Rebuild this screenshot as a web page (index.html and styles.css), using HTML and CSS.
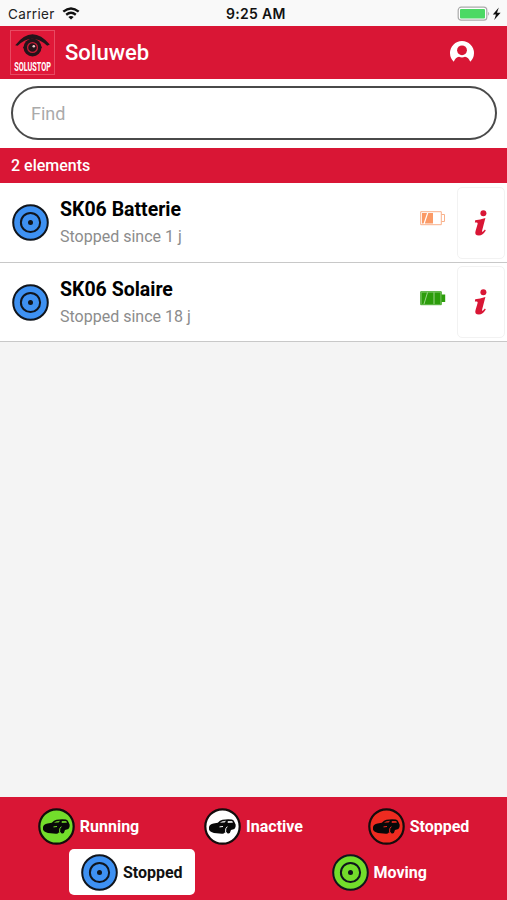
FILE: index.html
```
<!DOCTYPE html>
<html lang="en">
<head>
	<meta charset="utf-8">
	<meta name="viewport" content="width=device-width, initial-scale=1.0">
	<title>Soluweb</title>
	<link rel="stylesheet" href="styles.css">
</head>

<body>
	<!-- SHARED ICONS -->
	<svg class="defs" width="0" height="0">
		<symbol id="target" viewBox="0 0 37 37">
			<g fill="none" stroke="#10151c" stroke-width="2">
				<circle cx="18.5" cy="18.5" r="17.3" fill="currentColor"/>
				<circle cx="18.5" cy="18.5" r="9.6"/>
			</g>
			<circle cx="18.5" cy="18.5" r="2.5" fill="#10151c"/>
		</symbol>
		<symbol id="car" viewBox="0 0 37 37">
			<circle cx="18.5" cy="18.5" r="17.2" fill="currentColor" stroke="#140c0c" stroke-width="2.2"/>
			<path d="M5 19q.6-2.4 4.500-3.400l4.300-.8q2-2.500 4.700-3.100 5.500-1 9.500-.2 2 .5 2.700 3l1 2.200q.3 3.200-1.300 4.300l-3.400 1q-.7 3.300-2.500 3.600-1.500.1-2-1.500l-1.700.3q-1 1.600-2.800 1.400l-8-.8q-4.500-1.200-5-3.500z" fill="#080808"/>
			<path d="M15.800 14.700q2.200-1.900 6.200-1.900l-1.300 1.800zM23.800 12.900l4.400.2.800 1.700-5.300.1z" fill="currentColor" opacity=".85"/>
			<path d="M21.600 24.200q-.5-4.200 1.700-5.600M15.500 18.900l3.500-.4" fill="none" stroke="currentColor" stroke-width="1"/>
		</symbol>
		<symbol id="info" viewBox="0 0 14 26">
			<circle cx="9.4" cy="3.2" r="3"/>
			<path d="M1.200 10.300q4.800-.4 10.200-2.300L8.200 20.300q-.5 2 .5 1.400 1-.6 2.200-2.100l.9.800q-3 4.900-6.900 5-4.600 0-3.400-4.200l2.100-7.200q.4-1.500-.8-1.500H.9z"/>
		</symbol>
	</svg>

	<div class="status">
		<span class="carrier">Carrier</span>
		<svg class="wifi" width="18" height="13" viewBox="0 0 18 13">
			<path d="M1.3 4.7q7.7-6.4 15.4 0M4.2 7.7q4.800-3.700 9.600 0" fill="none" stroke="#111" stroke-width="2.4"/>
			<path d="M6.3 9.9q2.700-2 5.400 0L9 12.600z" fill="#111"/>
		</svg>
		<span class="time">9:25 AM</span>
		<svg class="power" width="46" height="16" viewBox="0 0 46 16">
			<rect x="1.2" y="1.2" width="28.6" height="13" rx="3" fill="#fff" stroke="#aaa" stroke-width="1.2"/>
			<rect x="3" y="3" width="25" height="9.4" rx="1" fill="#4cd964"/>
			<path d="M31.2 5.7q2 2 0 4z" fill="#aaa"/>
			<path d="M41.8 1.5L35.800 8.500h3.200L37.200 14 43.600 6.700H40z" fill="#111"/>
		</svg>
	</div>

	<header class="header">
		<svg class="logo" width="45" height="45" viewBox="0 0 45 45">
			<rect x=".5" y=".5" width="44" height="44" fill="#e01838" stroke="#e84a62"/>
			<path d="M5.2 15.2Q22-6.500 39.800 14.500l-2.600 1.300Q22 1.800 7.700 15.800z" fill="#23141a"/>
			<path d="M13 17.5Q22 5.500 32 17.300 22.500 31 13 17.500z" fill="#23141a"/>
			<circle cx="22.5" cy="17.5" r="9" fill="#23141a"/>
			<circle cx="22.5" cy="17.5" r="4.900" fill="none" stroke="#c51c36" stroke-width="1.3"/>
			<circle cx="23.8" cy="16.2" r="1.3" fill="#f4c8cd"/>
			<g transform="translate(4.2 40.6) scale(.56 1)"><text class="logo-text">SOLUSTOP</text></g>
		</svg>
		<h1>Soluweb</h1>
		<svg class="user" width="24" height="24" viewBox="0 0 24 24">
			<path d="M3.800 20.800a12 12 0 1 1 16.400 0Q18.500 16.500 15 15.800q-3 1.200-6 0-3.500.7-5.200 5z" fill="#fff"/>
			<circle cx="12" cy="9.3" r="4.9" fill="#d91635"/>
		</svg>
	</header>

	<div class="search">
		<input type="text" placeholder="Find">
	</div>

	<div class="count">2 elements</div>

	<ul class="list">
		<li>
			<svg class="icon blue"><use href="#target"/></svg>
			<div class="device">
				<h2>SK06 Batterie</h2>
				<p>Stopped since 1 j</p>
			</div>
			<svg class="battery" width="26" height="15" viewBox="0 0 26 15">
				<path d="M.7.7h20.600v13H.7z" fill="#fff" stroke="#f9b18a"/>
				<path d="M2 2h5L3.500 12.500H2zM8.300 2H13v10.500H4.800z" fill="#fb9a66"/>
				<path d="M21.500 3.500h3v7h-3" fill="none" stroke="#f9b18a"/>
			</svg>
			<a class="more"><svg width="14" height="26"><use href="#info"/></svg></a>
		</li>
		<li>
			<svg class="icon blue"><use href="#target"/></svg>
			<div class="device">
				<h2>SK06 Solaire</h2>
				<p>Stopped since 18 j</p>
			</div>
			<svg class="battery" width="26" height="15" viewBox="0 0 26 15">
				<path d="M.7.7h20.600v13H.7z" fill="#9bd38a" stroke="#46aa2a"/>
				<path d="M1.500 1.500H7L3.500 13h-2zM8 1.500h5.500V13h-9zM14.500 1.500h6V13h-6zM21.500 3.500h3.700v7.500h-3.700z" fill="#2c9d0b"/>
			</svg>
			<a class="more"><svg width="14" height="26"><use href="#info"/></svg></a>
		</li>
	</ul>

	<footer class="filters">
		<div class="three">
			<a class="filter"><svg class="icon green"><use href="#car"/></svg>Running</a>
			<a class="filter"><svg class="icon white"><use href="#car"/></svg>Inactive</a>
			<a class="filter"><svg class="icon red"><use href="#car"/></svg>Stopped</a>
		</div>
		<div class="two">
			<a class="filter active"><svg class="icon blue"><use href="#target"/></svg>Stopped</a>
			<a class="filter"><svg class="icon green"><use href="#target"/></svg>Moving</a>
		</div>
	</footer>
</body>
</html>
```

FILE: styles.css
```
* { box-sizing: border-box; }
body {
	background-color: #f4f4f4; display: flex; flex-flow: column nowrap; font-family: Roboto, sans-serif; height: 100vh; margin: 0;
}
h1, h2, p, ul { margin: 0; padding: 0; }
svg { display: block; flex: none; }
.defs { display: none; }

/* top bars */
.status {
	background: #f9f9f9; color: #222; display: grid; grid-template-columns: 54px 164px 64px 1fr; align-items: center; height: 26px; padding: 1px 4px 0 8px; font-family: Inter, sans-serif;
}
.carrier { font-size: 13.5px; letter-spacing: .35px; }
.time { color: #111; font-size: 14px; font-weight: 600; letter-spacing: .3px; white-space: nowrap; }
.power { justify-self: end; }
.header {
	background: #d91635; color: #fff; display: flex; align-items: center; height: 53px; padding: 0 33px 0 10px;
}
.header h1 { flex: 1; font-size: 22px; font-weight: 500; margin-left: 10px; }
.logo-text { fill: #fff; font: 700 13px Roboto, sans-serif; }

.search { background: #fff; height: 69px; padding: 7px 10px 8px 11px; }
.search input {
	background: #fff; border: 2px solid #4a4a4a; border-radius: 27px; font: 18px Roboto, sans-serif; height: 54px; outline: none; padding: 0 18px; width: 100%;
}
.search input::placeholder { color: #aaa; }
.count {
	background: #d91635; color: #fff; font-size: 16px; font-weight: 500; height: 35px; line-height: 35px; padding-left: 11px;
}

/* devices */
.list { flex: 1; list-style: none; }
.list li {
	background: #fff; border-bottom: 1px solid #c8c8c8; display: flex; align-items: center; height: 80px; padding: 0 2px 0 12px;
}
.list li + li { height: 79px; }
.icon { height: 37px; width: 37px; }
.blue { color: #3e91f2; } .green { color: #73dd2b; } .white { color: #fff; } .red { color: #ee2b20; }
.device { flex: 1; margin-left: 11px; padding-top: 1px; }
.device h2 { font-size: 19.5px; font-weight: 700; line-height: 27px; }
.device p { color: #8c8c8c; font-size: 16px; line-height: 27px; }
.battery { margin: -8px 11px 0 0; }
.more {
	border: 1px solid #f2f2f2; border-radius: 5px; display: flex; align-items: center; justify-content: center; height: 72px; width: 48px; fill: #d91635;
}

/* bottom filters */
.filters { background: #d91635; height: 103px; padding-top: 6px; }
.three, .two { display: grid; justify-items: center; }
.three { grid-template-columns: repeat(3, 1fr); padding: 0 6px; }
.two { grid-template-columns: repeat(2, 1fr); padding: 0 4px 0 8px; }
.filter {
	border-radius: 5px; color: #fff; display: flex; align-items: center; font-size: 16px; font-weight: 700; gap: 5px; height: 46px; padding: 0 12px;
}
.active { background: #fff; color: #111; }
```
